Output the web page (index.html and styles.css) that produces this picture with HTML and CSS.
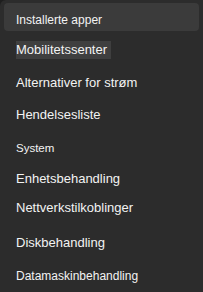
FILE: index.html
```html
<!DOCTYPE html>
<html lang="no">
<head>
<meta charset="utf-8">
<title>Meny</title>
<link rel="stylesheet" href="styles.css">
</head>
<body>
<nav class="menu">
  <div class="item item-apps">Installerte apper</div>
  <div class="item item-mobility"><span class="hover">Mobilitetssenter</span></div>
  <div class="item item-power">Alternativer for strøm</div>
  <div class="item item-events">Hendelsesliste</div>
  <div class="item item-system">System</div>
  <div class="item item-devices">Enhetsbehandling</div>
  <div class="item item-network">Nettverkstilkoblinger</div>
  <div class="item item-disk">Diskbehandling</div>
  <div class="item item-computer">Datamaskinbehandling</div>
</nav>
</body>
</html>
```

FILE: styles.css
```css
html, body {
  margin: 0;
  padding: 0;
  background: #1e1e1e;
}

.menu {
  box-sizing: border-box;
  width: 203px;
  height: 292px;
  padding: 3px 4px 0 4px;
  background: #2c2c2c;
  border-top-left-radius: 6px;
  font-family: "Liberation Sans", Arial, sans-serif;
  color: #f3f3f3;
  display: flex;
  flex-direction: column;
}

.item {
  line-height: 16px;
  height: 16px;
  padding-left: 12px;
  font-size: 13px;
  white-space: nowrap;
}

.item-apps {
  height: 28px;
  box-sizing: border-box;
  padding-top: 9px;
  font-size: 12px;
  background: #3b3b3b;
  border-radius: 4px;
}

.item-mobility { margin-top: 10px; }

.hover {
  display: inline-block;
  background: #3f3f3f;
  line-height: 18px;
  height: 18px;
  margin-top: -0.5px;
  padding-right: 4px;
}

.item-power { margin-top: 18px; }
.item-events { margin-top: 16px; }
.item-system { margin-top: 17px; font-size: 11.5px; }
.item-devices { margin-top: 15px; }
.item-network { margin-top: 13px; }
.item-disk { margin-top: 18.5px; }
.item-computer { margin-top: 17.5px; font-size: 12px; }
```
